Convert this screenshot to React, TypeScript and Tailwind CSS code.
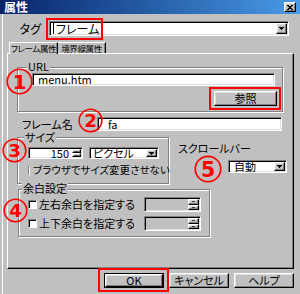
import React from 'react';

const raised =
  'border border-t-white border-l-white border-r-black border-b-black shadow-[inset_-1px_-1px_0_#808080,inset_1px_1px_0_#dfdfdf] bg-[#c0c0c0]';
const sunken =
  'border border-t-[#808080] border-l-[#808080] border-r-white border-b-white shadow-[inset_1px_1px_0_#000,inset_-1px_-1px_0_#dfdfdf]';
const etched = 'border border-[#808080] shadow-[inset_1px_1px_0_#fff,1px_1px_0_#fff]';

const DownArrow = () => (
  <svg width="5" height="3" viewBox="0 0 5 3" shapeRendering="crispEdges">
    <path d="M0 0h5v1h-1v1h-1v1h-1v-1h-1v-1h-1z" fill="#000" />
  </svg>
);

const DropBtn = () => (
  <div className={`${raised} w-[11px] h-full flex items-center justify-center`}>
    <DownArrow />
  </div>
);

const SpinBtns = ({ w = 'w-[9px]' }: { w?: string }) => (
  <div className={`flex flex-col h-full ${w}`}>
    <div className={`${raised} flex-1 flex items-center justify-center`}>
      <div className="w-[3px] h-px bg-[#404040]" />
    </div>
    <div className={`${raised} flex-1 flex items-center justify-center`}>
      <div className="w-[3px] h-px bg-[#404040]" />
    </div>
  </div>
);

const Check = () => (
  <div className="w-[9px] h-[9px] bg-white border border-t-[#808080] border-l-[#808080] border-r-white border-b-white shadow-[inset_1px_1px_0_#000]" />
);

const Mark = ({ n, cls }: { n: number; cls: string }) => (
  <svg className={`absolute ${cls}`} viewBox="0 0 26 26">
    <circle cx="13" cy="13" r="11.8" fill="none" stroke="#ff0000" strokeWidth="1.6" />
    <text
      x="13"
      y="20"
      textAnchor="middle"
      fontSize="19"
      fontWeight="bold"
      fontFamily="DejaVu Sans, sans-serif"
      fill="#ff0000"
    >
      {n}
    </text>
  </svg>
);

export default function App() {
  return (
    <div className="relative w-[300px] h-[294px] overflow-hidden bg-[#c0c0c0] text-black font-['Noto_Sans_CJK_JP',sans-serif] [font-feature-settings:'palt'] text-[11px] leading-none shadow-[inset_2px_0_0_#c0c0c0,inset_3px_0_0_#fff]">
      {/* title bar */}
      <div className="flex items-center justify-between h-[14px] bg-linear-to-r from-[#0a246a] to-[#4a9be8] pl-[4px] pr-[4px]">
        <span className="text-white font-bold text-[12px] leading-[14px]">属性</span>
        <div className={`${raised} w-[12px] h-[10px] flex items-center justify-center`}>
          <svg width="6" height="5" viewBox="0 0 6 5" shapeRendering="crispEdges">
            <path d="M0 0h2v1h2v-1h2v1h-1v1h-1v1h1v1h1v1h-2v-1h-2v1h-2v-1h1v-1h1v-1h-1v-1h-1z" fill="#000" />
          </svg>
        </div>
      </div>

      {/* tag row */}
      <div className="flex items-center mt-[7px]">
        <span className="w-[41px] text-right text-[12px]">タグ</span>
        <div className={`${sunken} ml-[8px] w-[240px] h-[15px] bg-white flex items-stretch p-px`}>
          <div className="flex-1 flex items-center pl-[2px]">
            <div className="w-px h-[11px] bg-black" />
            <span className="ml-[2px] text-[12px]">フレーム</span>
          </div>
          <DropBtn />
        </div>
      </div>

      {/* tabs */}
      <div className="relative z-10 flex items-start ml-[9px] mt-[6px] h-[11px]">
        <div className="w-[49px] h-[12px] bg-[#c0c0c0] border-t border-l border-r border-t-white border-l-white border-r-black shadow-[inset_-1px_0_0_#808080] flex items-center justify-center text-[8.5px] tracking-[-0.4px] whitespace-nowrap">
          フレーム属性
        </div>
        <div className="w-[48px] h-[11px] border-t border-r border-t-white border-r-black shadow-[inset_-1px_0_0_#808080] flex items-center justify-center text-[8.5px] tracking-[-0.4px] whitespace-nowrap">
          境界線属性
        </div>
      </div>

      {/* panel */}
      <div className="ml-[7px] w-[287px] h-[216px] border border-t-white border-l-white border-r-black border-b-black shadow-[inset_-1px_-1px_0_#808080] flex flex-col">
        {/* URL group */}
        <div className={`${etched} relative mt-[13px] ml-[9px] w-[266px] h-[45px] pt-[5px] pl-[14px] flex flex-col`}>
          <span className="absolute -top-[7px] left-[9px] px-px bg-[#c0c0c0]">URL</span>
          <div className={`${sunken} w-[243px] h-[13px] bg-white flex items-center pl-[5px]`}>menu.htm</div>
          <div className="flex justify-end pr-[5px] mt-[5px]">
            <div className={`${raised} w-[63px] h-[15px] flex items-center justify-center`}>参照</div>
          </div>
        </div>

        {/* frame name */}
        <div className="flex items-center mt-[5px] pl-[14px] h-[14px]">
          <span className="w-[75px]">フレーム名</span>
          <div className={`${sunken} w-[185px] h-[14px] bg-white flex items-center pl-[10px]`}>fa</div>
        </div>

        {/* size + scrollbar */}
        <div className="flex mt-[6px] ml-[9px]">
          <div className={`${etched} relative w-[152px] h-[47px] pt-[9px] pl-[10px]`}>
            <span className="absolute -top-[6px] left-[6px] px-px bg-[#c0c0c0]">サイズ</span>
            <div className="flex gap-[6px]">
              <div className={`${sunken} w-[55px] h-[12px] bg-white flex items-stretch p-px`}>
                <span className="flex-1 flex items-center justify-end pr-[3px]">150</span>
                <SpinBtns />
              </div>
              <div className={`${sunken} w-[70px] h-[12px] bg-white flex items-stretch p-px`}>
                <span className="flex-1 flex items-center pl-[2px]">ピクセル</span>
                <DropBtn />
              </div>
            </div>
            <div className="flex items-center mt-[6px] h-[11px]">
              <Check />
              <span className="ml-[3px] text-[10.5px] whitespace-nowrap">ブラウザでサイズ変更させない</span>
            </div>
          </div>
          <div className="flex flex-col ml-[9px] pt-[6px]">
            <span>スクロールバー</span>
            <div className={`${sunken} ml-[50px] mt-[6px] w-[59px] h-[13px] bg-white flex items-stretch p-px`}>
              <span className="flex-1 flex items-center pl-[4px]">自動</span>
              <DropBtn />
            </div>
          </div>
        </div>

        {/* margin group */}
        <div className={`${etched} relative mt-[5px] ml-[10px] w-[192px] h-[48px] pt-[7px] pl-[9px] flex flex-col gap-[4px]`}>
          <span className="absolute -top-[7px] left-[3px] px-px bg-[#c0c0c0]">余白設定</span>
          <div className="flex items-center h-[15px]">
            <div className="w-[116px] flex items-center">
              <Check />
              <span className="ml-[2px] whitespace-nowrap">左右余白を指定する</span>
            </div>
            <div className={`${sunken} w-[57px] h-[15px] flex items-stretch justify-end p-px`}>
              <SpinBtns w="w-[11px]" />
            </div>
          </div>
          <div className="flex items-center h-[15px]">
            <div className="w-[116px] flex items-center">
              <Check />
              <span className="ml-[2px] whitespace-nowrap">上下余白を指定する</span>
            </div>
            <div className={`${sunken} w-[57px] h-[15px] flex items-stretch justify-end p-px`}>
              <SpinBtns w="w-[11px]" />
            </div>
          </div>
        </div>
      </div>

      {/* buttons */}
      <div className="flex justify-end gap-[5px] mt-[4px] mr-[6px]">
        <div className="w-[60px] h-[15px] border border-black">
          <div className={`${raised} w-full h-full flex items-center justify-center`}>OK</div>
        </div>
        <div className={`${raised} w-[60px] h-[15px] flex items-center justify-center`}>キャンセル</div>
        <div className={`${raised} w-[60px] h-[15px] flex items-center justify-center`}>ヘルプ</div>
      </div>

      {/* annotations */}
      <div className="absolute left-[46px] top-[18px] w-[57px] h-[22px] border-2 border-[#ff0000]" />
      <div className="absolute left-[209px] top-[87px] w-[72px] h-[23px] border-2 border-[#ff0000]" />
      <div className="absolute left-[98px] top-[268px] w-[71px] h-[24px] border-2 border-[#ff0000]" />
      <Mark n={1} cls="left-[6px] top-[68px] w-[27px] h-[27px]" />
      <Mark n={2} cls="left-[78px] top-[108px] w-[25px] h-[25px]" />
      <Mark n={3} cls="left-[2px] top-[138px] w-[25px] h-[25px]" />
      <Mark n={4} cls="left-[3px] top-[198px] w-[25px] h-[25px]" />
      <Mark n={5} cls="left-[194px] top-[155px] w-[28px] h-[28px]" />
    </div>
  );
}
